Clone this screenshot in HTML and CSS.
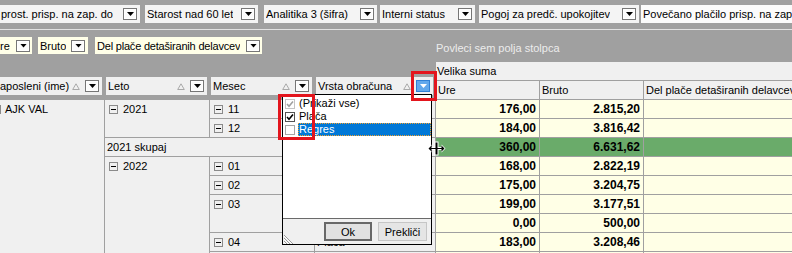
FILE: index.html
```html
<!DOCTYPE html>
<html>
<head>
<meta charset="utf-8">
<link rel="stylesheet" href="styles.css">
</head>
<body>
<div class="pivot">
  <div class="filters">
    <div class="chip f1"><span class="ct">prost. prisp. na zap. do</span><span class="dd"></span></div>
    <div class="chip f2"><span class="ct">Starost nad 60 let</span><span class="dd"></span></div>
    <div class="chip f3"><span class="ct">Analitika 3 (šifra)</span><span class="dd"></span></div>
    <div class="chip f4"><span class="ct">Interni status</span><span class="dd"></span></div>
    <div class="chip f5"><span class="ct">Pogoj za predč. upokojitev</span><span class="dd"></span></div>
    <div class="chip f6"><span class="ct">Povečano plačilo prisp. na zap. do</span><span class="dd"></span></div>
  </div>
  <div class="sep"></div>
  <div class="mid">
    <div class="data-fields">
      <div class="chip y y1"><span class="ct">re</span><span class="dd"></span></div>
      <div class="chip y y2"><span class="ct">Bruto</span><span class="dd"></span></div>
      <div class="chip y y3"><span class="ct">Del plače detaširanih delavcev</span><span class="dd"></span></div>
    </div>
    <div class="hint">Povleci sem polja stolpca</div>
  </div>
  <div class="heads">
    <div class="row-fields">
      <div class="fb fb1"><span class="ft">aposleni (ime)</span><span class="sort"><svg width="8" height="7" viewBox="0 0 8 7"><path d="M4 0.8 L7.3 6.5 H0.7 Z" fill="none" stroke="#a9a9a9" stroke-width="1"/></svg></span><span class="dd"></span></div>
      <div class="fb fb2"><span class="ft">Leto</span><span class="sort"><svg width="8" height="7" viewBox="0 0 8 7"><path d="M4 0.8 L7.3 6.5 H0.7 Z" fill="none" stroke="#a9a9a9" stroke-width="1"/></svg></span><span class="dd"></span></div>
      <div class="fb fb3"><span class="ft">Mesec</span><span class="sort"><svg width="8" height="7" viewBox="0 0 8 7"><path d="M4 0.8 L7.3 6.5 H0.7 Z" fill="none" stroke="#a9a9a9" stroke-width="1"/></svg></span><span class="dd"></span></div>
      <div class="fb fb4"><span class="ft">Vrsta obračuna</span><span class="sort"><svg width="8" height="7" viewBox="0 0 8 7"><path d="M4 0.8 L7.3 6.5 H0.7 Z" fill="none" stroke="#a9a9a9" stroke-width="1"/></svg></span><span class="dd act"></span></div>
    </div>
    <div class="col-values">
      <div class="gt">Velika suma</div>
      <div class="measures"><div class="mh">Ure</div><div class="mh">Bruto</div><div class="mh">Del plače detaširanih delavcev</div></div>
    </div>
  </div>
  <div class="grid">
    <div class="rh ca r1 s9"><span class="mb mb-a"></span><span class="tx-a">AJK VAL</span></div>

    <div class="rh cb2 r1 s2"><span class="mb"></span><span class="tx">2021</span></div>
    <div class="rh cbsum r3">2021 skupaj</div>
    <div class="rh cb2 r4 s6"><span class="mb"></span><span class="tx">2022</span></div>

    <div class="rh cc r1"><span class="mb"></span><span class="tx">11</span></div>
    <div class="rh cc r2"><span class="mb"></span><span class="tx">12</span></div>
    <div class="rh cc r4"><span class="mb"></span><span class="tx">01</span></div>
    <div class="rh cc r5"><span class="mb"></span><span class="tx">02</span></div>
    <div class="rh cc r6 s2"><span class="mb"></span><span class="tx">03</span></div>
    <div class="rh cc r8"><span class="mb"></span><span class="tx">04</span></div>
    <div class="rh cc r9"></div>

    <div class="rh cd r1"></div>
    <div class="rh cd r2"></div>
    <div class="rh cd r4"></div>
    <div class="rh cd r5"></div>
    <div class="rh cd r6"></div>
    <div class="rh cd r7"></div>
    <div class="rh cd r8">Plača</div>
    <div class="rh cd r9"></div>

    <div class="dc c5 r1">176,00</div><div class="dc c6 r1">2.815,20</div><div class="dc c7 r1"></div>
    <div class="dc c5 r2">184,00</div><div class="dc c6 r2">3.816,42</div><div class="dc c7 r2"></div>
    <div class="dc c5 r3 tot">360,00</div><div class="dc c6 r3 tot">6.631,62</div><div class="dc c7 r3 tot"></div>
    <div class="dc c5 r4">168,00</div><div class="dc c6 r4">2.822,19</div><div class="dc c7 r4"></div>
    <div class="dc c5 r5">175,00</div><div class="dc c6 r5">3.204,75</div><div class="dc c7 r5"></div>
    <div class="dc c5 r6">199,00</div><div class="dc c6 r6">3.177,51</div><div class="dc c7 r6"></div>
    <div class="dc c5 r7">0,00</div><div class="dc c6 r7">500,00</div><div class="dc c7 r7"></div>
    <div class="dc c5 r8">183,00</div><div class="dc c6 r8">3.208,46</div><div class="dc c7 r8"></div>
    <div class="dc c5 r9"></div><div class="dc c6 r9"></div><div class="dc c7 r9"></div>
  </div>

  <div class="popup">
    <div class="plist">
      <div class="pitem"><span class="ck dis"><svg width="8" height="8" viewBox="0 0 8 8"><path d="M1 4 L3 6.2 L7 1.5" fill="none" stroke="#a0a0a0" stroke-width="1.6"/></svg></span><span class="pl">(Prikaži vse)</span></div>
      <div class="pitem"><span class="ck on"><svg width="8" height="8" viewBox="0 0 8 8"><path d="M1 4 L3 6.2 L7 1.5" fill="none" stroke="#000" stroke-width="1.6"/></svg></span><span class="pl">Plača</span></div>
      <div class="pitem sel"><span class="ck"></span><span class="pl">Regres</span></div>
    </div>
    <div class="pbar">
      <span class="grip"><svg width="11" height="10" viewBox="0 0 11 10"><path d="M0 1 L9 10 M0 4 L6 10 M0 7 L3 10" stroke="#9a9a9a" stroke-width="1"/><path d="M0 2 L8 10 M0 5 L5 10 M0 8 L2 10" stroke="#ffffff" stroke-width="1"/></svg></span>
      <button class="btn def">Ok</button>
      <button class="btn">Prekliči</button>
    </div>
  </div>

  <div class="mark mark1"></div>
  <div class="mark mark2"></div>
  <svg class="cursor" width="19" height="15" viewBox="0 0 19 15"><path d="M0.5 7.5 L4.5 3.5 L4.5 6 L7.5 6 L7.5 0.5 L11.5 0.5 L11.5 6 L14.5 6 L14.5 3.5 L18.5 7.5 L14.5 11.5 L14.5 9 L11.5 9 L11.5 14.5 L7.5 14.5 L7.5 9 L4.5 9 L4.5 11.5 Z" fill="#fff"/><path d="M1.5 7.5 L4.5 4.6 L4.5 7 L8.5 7 L8.5 1.5 L10.5 1.5 L10.5 7 L14.5 7 L14.5 4.6 L17.5 7.5 L14.5 10.4 L14.5 8 L10.5 8 L10.5 13.5 L8.5 13.5 L8.5 8 L4.5 8 L4.5 10.4 Z" fill="#000"/></svg>
</div>
</body>
</html>
```

FILE: styles.css
```css
* { box-sizing: border-box; }
html, body { margin: 0; padding: 0; }
body {
  width: 792px;
  height: 253px;
  overflow: hidden;
  background: #a0a0a0;
  font-family: "Liberation Sans", Arial, sans-serif;
  font-size: 11px;
  color: #000;
}
.pivot {
  position: relative;
  width: 792px;
  height: 253px;
  overflow: hidden;
  background: #a0a0a0;
}

/* filter chips */
.filters {
  display: flex;
  height: 29px;
  padding-top: 5px;
  overflow: hidden;
}
.chip {
  display: flex;
  align-items: center;
  justify-content: space-between;
  flex: none;
  height: 18px;
  padding: 0 3px 0 2px;
  background: #f4f4f4;
  white-space: nowrap;
  overflow: hidden;
}
.ct {
  flex: 0 1 auto;
  min-width: 0;
  overflow: hidden;
}
.f1 { width: 140px; padding-left: 1px; }
.f2 { width: 113px; margin-left: 5px; }
.f3 { width: 113px; margin-left: 6px; }
.f4 { width: 95px; margin-left: 3px; }
.f5 { width: 160px; margin-left: 4px; }
.f6 { width: 200px; margin-left: 2px; background: #fbfbfb; }
.f6 .ct { overflow: visible; flex: none; }

.dd {
  position: relative;
  flex: none;
  width: 14px;
  height: 12px;
  border: 1px solid #767676;
  background: #fbfbfb;
  box-shadow: inset 0 0 0 1px #ffffff;
}
.dd::after {
  content: "";
  position: absolute;
  left: 3px;
  top: 3px;
  width: 7px;
  height: 4px;
  background: #000;
  clip-path: polygon(0 0, 100% 0, 50% 100%);
}
.dd.act {
  background: #62a8ec;
  border-color: #2f80d6;
  box-shadow: none;
}
.dd.act::after { background: #fff; }

.sep { height: 1px; background: #e2e2e2; }

/* data field chips + column hint */
.mid {
  display: flex;
  height: 31px;
}
.data-fields {
  display: flex;
  width: 436px;
  flex: none;
  padding-top: 7px;
}
.chip.y { height: 17px; background: #ffffe8; }
.y1 { width: 32px; padding-left: 0; padding-right: 2px; }
.y2 { width: 50px; margin-left: 6px; }
.y3 { width: 167px; margin-left: 7px; padding-right: 2px; letter-spacing: -0.2px; }
.hint {
  padding-top: 11px;
  line-height: 14px;
  color: #ececec;
  white-space: nowrap;
}

/* header area */
.heads {
  display: flex;
  height: 39px;
}
.row-fields {
  display: flex;
  gap: 4px;
  width: 436px;
  flex: none;
  padding-top: 16px;
  align-items: flex-start;
}
.fb {
  display: flex;
  align-items: center;
  height: 18px;
  padding: 0 3px 0 2px;
  background: #f0f0f0;
  white-space: nowrap;
}
.fb1 { width: 102px; padding-left: 0; }
.fb2 { width: 101px; }
.fb3 { width: 101px; }
.fb4 { width: 117px; }
.ft { flex: 1; }
.sort { display: flex; margin-right: 5px; }

.col-values {
  flex: 1;
  padding-top: 1px;
}
.gt {
  height: 18px;
  line-height: 18px;
  padding-left: 1px;
  background: #f0f0f0;
  margin-bottom: 1px;
  white-space: nowrap;
}
.measures {
  display: grid;
  grid-template-columns: 103px 103px 1fr;
  gap: 1px;
  height: 18px;
}
.mh {
  background: #f0f0f0;
  line-height: 18px;
  padding-left: 2px;
  white-space: nowrap;
  overflow: hidden;
}

/* main grid */
.grid {
  display: grid;
  grid-template-columns: 104px 104px 104px 120px 103px 103px 148px;
  grid-template-rows: repeat(9, 18px);
  gap: 1px;
  background: #a0a0a0;
}
.rh {
  display: flex;
  align-items: flex-start;
  background: #f0f0f0;
  line-height: 18px;
  padding-left: 4px;
  white-space: nowrap;
  overflow: hidden;
}
.ca { grid-column: 1; }
.cb2 { grid-column: 2; }
.cbsum { grid-column: 2 / span 3; padding-left: 2px; }
.cc { grid-column: 3; }
.cd { grid-column: 4; padding-left: 2px; }
.c5 { grid-column: 5; }
.c6 { grid-column: 6; }
.c7 { grid-column: 7; }
.r1 { grid-row-start: 1; }
.r2 { grid-row-start: 2; }
.r3 { grid-row-start: 3; }
.r4 { grid-row-start: 4; }
.r5 { grid-row-start: 5; }
.r6 { grid-row-start: 6; }
.r7 { grid-row-start: 7; }
.r8 { grid-row-start: 8; }
.r9 { grid-row-start: 9; }
.s2 { grid-row-end: span 2; }
.s6 { grid-row-end: span 6; }
.s9 { grid-row-end: span 9; }

.mb {
  position: relative;
  flex: none;
  width: 9px;
  height: 9px;
  margin-top: 5px;
  border: 1px solid #8a8a8a;
}
.mb::after {
  content: "";
  position: absolute;
  left: 1px;
  top: 3px;
  width: 5px;
  height: 1px;
  background: #000;
}
.mb-a { margin-left: -12px; }
.tx { margin-left: 5px; }
.tx-a { margin-left: 4px; }

.dc {
  background: #ffffe6;
  text-align: right;
  padding-right: 3px;
  font-weight: bold;
  font-size: 12px;
  line-height: 18px;
  white-space: nowrap;
}
.dc.tot { background: #6aab6a; }

/* filter popup */
.popup {
  position: absolute;
  left: 282px;
  top: 94px;
  width: 150px;
  height: 151px;
  border: 1px solid #000;
  background: #fff;
  display: flex;
  flex-direction: column;
}
.plist {
  flex: 1;
  padding-top: 2px;
}
.pitem {
  display: flex;
  align-items: center;
  height: 13px;
}
.ck {
  display: flex;
  align-items: center;
  justify-content: center;
  flex: none;
  width: 10px;
  height: 10px;
  margin-left: 2px;
  border: 1px solid #a6a6a6;
  background: #fff;
}
.ck.dis { border-color: #c4c4c4; }
.ck.on { border-color: #555; }
.pl {
  flex: 1;
  margin-left: 3px;
  padding-left: 1px;
  line-height: 13px;
  white-space: nowrap;
}
.sel .pl {
  background: #0078d7;
  color: #fff;
  outline: 1px dotted #f0a030;
  outline-offset: -1px;
}
.pbar {
  display: flex;
  align-items: center;
  gap: 6px;
  height: 26px;
  border-top: 1px solid #6a6a6a;
  background: #f0f0f0;
  padding: 0 4px 0 1px;
}
.grip {
  display: flex;
  align-self: flex-end;
  margin-right: auto;
}
.btn {
  height: 19px;
  margin: 0;
  padding: 0;
  font-family: "Liberation Sans", Arial, sans-serif;
  font-size: 11px;
  color: #000;
  background: #e5e5e5;
  border: 1px solid #c6c6c6;
  width: 49px;
}
.btn.def {
  width: 48px;
  border: 2px solid #686868;
  background: #e1e1e1;
}

/* annotation marks */
.mark {
  position: absolute;
  border: 3px solid #e3151d;
}
.mark1 { left: 411px; top: 71px; width: 26px; height: 30px; }
.mark2 { left: 278px; top: 94px; width: 37px; height: 46px; }

.cursor {
  position: absolute;
  left: 427px;
  top: 141px;
}
```
